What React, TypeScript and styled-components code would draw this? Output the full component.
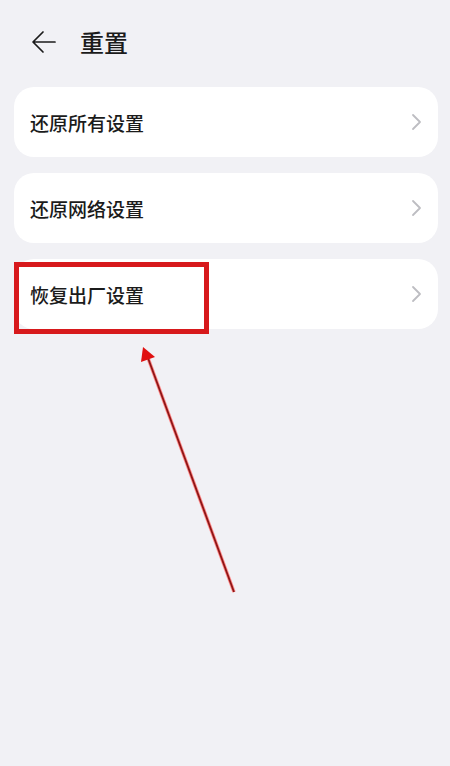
import React from "react";
import styled, { createGlobalStyle } from "styled-components";

const GlobalStyle = createGlobalStyle`
  html, body {
    margin: 0;
    padding: 0;
    background: #f1f1f5;
  }
  body {
    font-family: "Noto Sans CJK SC", "Noto Sans", sans-serif;
    color: #1b1b1b;
  }
`;

const Page = styled.div`
  position: relative;
  width: 450px;
  height: 766px;
  overflow: hidden;
  background: #f1f1f5;
`;

const Header = styled.div`
  display: flex;
  align-items: center;
  height: 84px;
  padding-left: 31px;
  gap: 23px;
`;

const Title = styled.h1`
  margin: 0;
  font-size: 24px;
  font-weight: 500;
  line-height: 1;
  color: #1b1b1b;
`;

const List = styled.div`
  display: flex;
  flex-direction: column;
  gap: 16px;
  padding: 3px 12px 0 14px;
`;

const Card = styled.div`
  position: relative;
  display: flex;
  align-items: center;
  justify-content: space-between;
  height: 70px;
  padding: 0 16px;
  background: #ffffff;
  border-radius: 20px;
`;

const Label = styled.span`
  font-size: 19px;
  font-weight: 500;
  color: #1b1b1b;
`;

const Highlight = styled.div`
  position: absolute;
  left: 0;
  top: 3px;
  width: 195px;
  height: 72px;
  box-sizing: border-box;
  border: 5px solid #d7191c;
`;

const Overlay = styled.svg`
  position: absolute;
  left: 0;
  top: 0;
  pointer-events: none;
`;

const BackIcon = () => (
  <svg width="26" height="24" viewBox="0 0 26 24" fill="none">
    <path
      d="M24 12H3M12 2L2 12l10 10"
      stroke="#1b1b1b"
      strokeWidth="1.7"
      strokeLinecap="round"
      strokeLinejoin="round"
    />
  </svg>
);

const Chevron = () => (
  <svg width="12" height="18" viewBox="0 0 12 18" fill="none">
    <path
      d="M3 2l7 7-7 7"
      stroke="#bdbdc2"
      strokeWidth="1.8"
      strokeLinecap="round"
      strokeLinejoin="round"
    />
  </svg>
);

const items = [
  { label: "还原所有设置" },
  { label: "还原网络设置" },
  { label: "恢复出厂设置", marked: true },
];

export default function App() {
  return (
    <Page>
      <GlobalStyle />
      <Header>
        <BackIcon />
        <Title>重置</Title>
      </Header>
      <List>
        {items.map((item) => (
          <Card key={item.label}>
            <Label>{item.label}</Label>
            <Chevron />
            {item.marked && <Highlight />}
          </Card>
        ))}
      </List>
      <Overlay width="450" height="766" viewBox="0 0 450 766">
        <line x1="234" y1="592" x2="148" y2="358" stroke="#ff8a8a" strokeWidth="3.5" />
        <line x1="234" y1="592" x2="148" y2="358" stroke="#8e1616" strokeWidth="1.8" />
        <polygon points="143,347 155,357 141,362" fill="#e01010" />
      </Overlay>
    </Page>
  );
}
